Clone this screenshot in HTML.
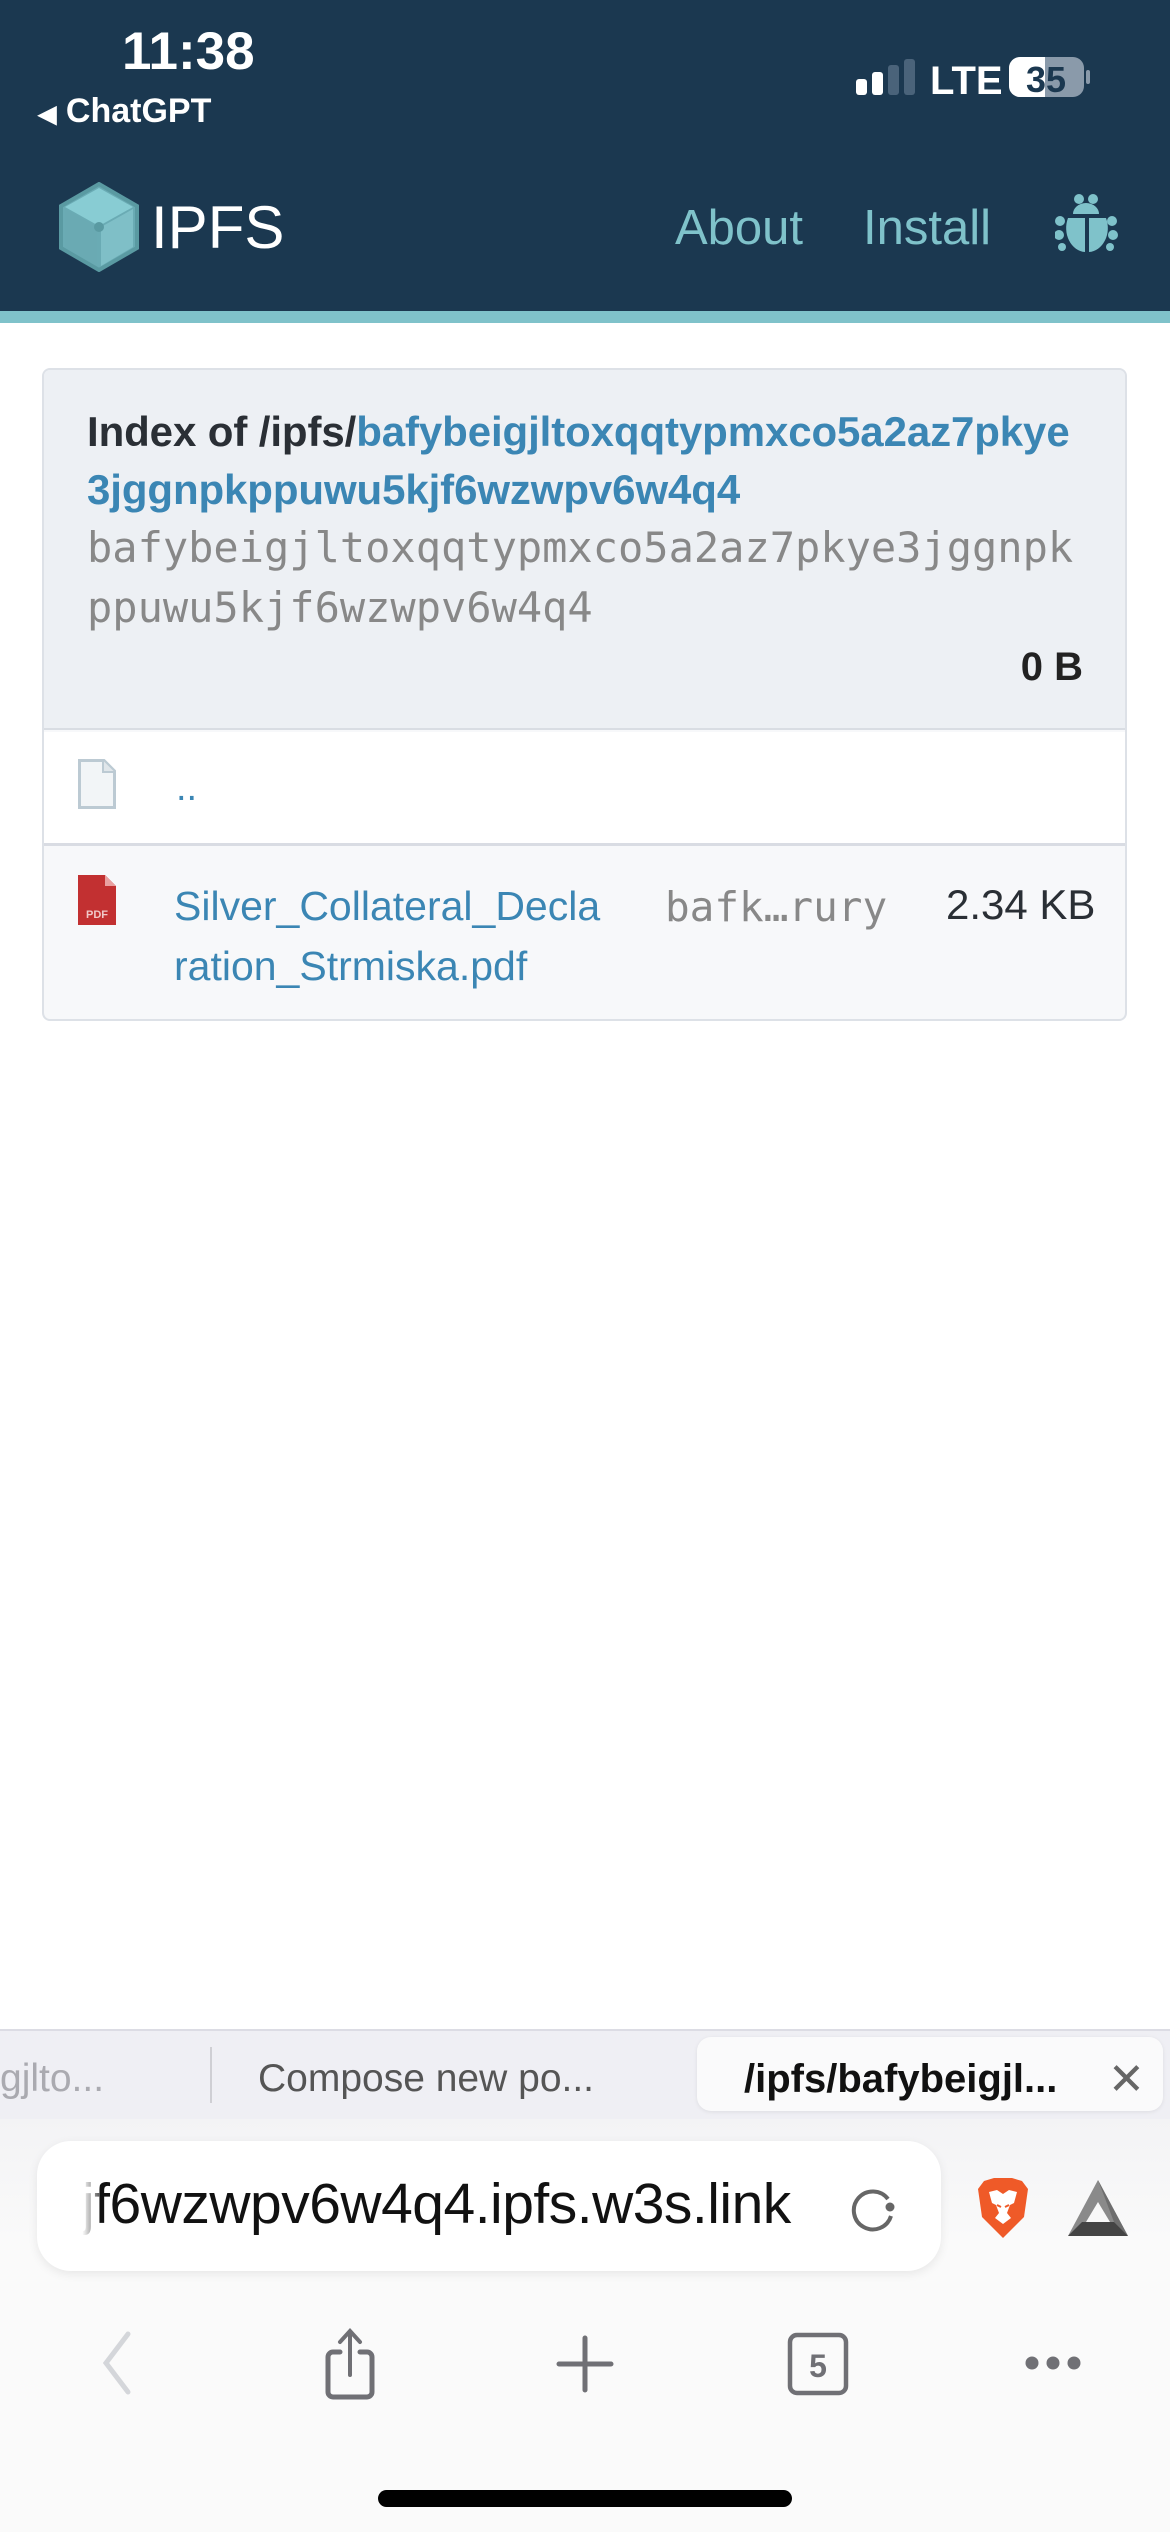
<!DOCTYPE html>
<html><head><meta charset="utf-8"><style>
*{margin:0;padding:0;box-sizing:border-box}
body{width:1170px;height:2532px;position:relative;overflow:hidden;background:#fff;font-family:"Liberation Sans",Arial,sans-serif}
.a{position:absolute;white-space:nowrap}
.mono{font-family:"DejaVu Sans Mono","Liberation Mono",monospace}
</style></head><body>
<div class="a" style="left:0;top:0;width:1170px;height:311px;background:#1b3850"></div>
<div class="a" style="left:0;top:311px;width:1170px;height:12px;background:#7fc2ca"></div>
<div class="a" style="left:122px;top:22px;font-size:53px;font-weight:bold;color:#fff;line-height:60px">11:38</div>
<div class="a" style="left:38px;top:92px;font-size:34px;font-weight:bold;color:#fff;line-height:38px"><span style="font-size:24px">◀</span> ChatGPT</div>
<svg class="a" style="left:850px;top:55px" width="240" height="46">
<rect x="6" y="24" width="11" height="16" rx="3" fill="#fff"/>
<rect x="22" y="17" width="11" height="23" rx="3" fill="#fff"/>
<rect x="38" y="10" width="11" height="30" rx="3" fill="#4a637a"/>
<rect x="54" y="4" width="11" height="36" rx="3" fill="#4a637a"/>
<text x="80" y="39" font-family="Liberation Sans" font-weight="bold" font-size="40" fill="#fff">LTE</text>
<rect x="159" y="2" width="75" height="40" rx="11" fill="#8a9aaa"/>
<path d="M170 2 H195 V42 H170 A11 11 0 0 1 159 31 V13 A11 11 0 0 1 170 2Z" fill="#fff"/>
<rect x="236" y="15" width="4" height="14" rx="2" fill="#8a9aaa"/>
<text x="196" y="37" text-anchor="middle" font-family="Liberation Sans" font-weight="bold" font-size="36" fill="#1b3850">35</text>
</svg>
<svg class="a" style="left:58px;top:182px" width="82" height="90" viewBox="0 0 82 90">
<path d="M41 2 L79 24 L79 66 L41 88 L3 66 L3 24Z" fill="#6aabb4" stroke="#5a9aa2" stroke-width="4"/>
<path d="M41 6 L75 25 L41 44 L7 25Z" fill="#88ccd3"/>
<path d="M7 27 L39 45 L39 84 L7 65Z" fill="#6aaab3"/>
<path d="M43 45 L75 27 L75 65 L43 84Z" fill="#7fbfc7"/>
<circle cx="41" cy="45" r="5" fill="#5a9aa2"/>
</svg>
<div class="a" style="left:151px;top:193px;font-size:60px;color:#fff;line-height:70px">IPFS</div>
<div class="a" style="left:675px;top:200px;font-size:49px;color:#7fc2ca;line-height:56px">About</div>
<div class="a" style="left:863px;top:200px;font-size:49px;color:#7fc2ca;line-height:56px">Install</div>
<svg class="a" style="left:1055px;top:194px" width="64" height="60" viewBox="0 0 64 60">
<g fill="#7fc2ca"><circle cx="24" cy="5" r="5"/><circle cx="38" cy="5" r="5"/>
<path d="M18 20 A13 11 0 0 1 44 20Z"/>
<path d="M13 24 H30 V58 A20 24 0 0 1 13 24Z"/><path d="M34 24 H51 A20 24 0 0 1 34 58Z"/>
<circle cx="5" cy="27" r="5"/><circle cx="4" cy="41" r="5"/><circle cx="7" cy="53" r="4"/>
<circle cx="57" cy="27" r="5"/><circle cx="58" cy="41" r="5"/><circle cx="55" cy="53" r="4"/></g>
</svg>

<div class="a" style="left:42px;top:368px;width:1085px;height:653px;border:2px solid #dde1e7;border-radius:8px;overflow:hidden;background:#f7f8fa">
<div style="position:absolute;left:0;top:0;width:100%;height:360px;background:#edf0f4;border-bottom:2px solid #d9dde3"></div>
<div style="position:absolute;left:0;top:362px;width:100%;height:114px;background:#fff;border-bottom:3px solid #d9dce3"></div>
</div>
<div class="a" style="left:87px;top:403px;font-size:42px;font-weight:bold;color:#2a2f35;line-height:58px;letter-spacing:-0.1px">Index of /ipfs/<span style="color:#3b86b4">bafybeigjltoxqqtypmxco5a2az7pkye</span><br><span style="color:#3b86b4">3jggnpkppuwu5kjf6wzwpv6w4q4</span></div>
<div class="a mono" style="left:87px;top:518px;font-size:42px;color:#888;line-height:60px">bafybeigjltoxqqtypmxco5a2az7pkye3jggnpk<br>ppuwu5kjf6wzwpv6w4q4</div>
<div class="a" style="left:990px;top:644px;width:93px;text-align:right;font-size:40px;font-weight:bold;color:#222;line-height:46px">0 B</div>

<svg class="a" style="left:78px;top:759px" width="38" height="50"><path d="M1.5 1.5 H26 L36.5 12 V48.5 H1.5Z" fill="#f2f5f7" stroke="#bccad3" stroke-width="3"/><path d="M25 1.5 V13 H36.5" fill="#e0e6ea" stroke="#bccad3" stroke-width="2"/></svg>
<div class="a" style="left:176px;top:766px;font-size:38px;color:#3b86b4;line-height:44px">..</div>

<svg class="a" style="left:78px;top:875px" width="38" height="50"><path d="M0 0 H27 L38 11 V50 H0Z" fill="#c23031"/><path d="M27 0 V11 H38Z" fill="#e9a0a0"/><text x="19" y="43" text-anchor="middle" font-family="Liberation Sans" font-weight="bold" font-size="11" fill="#f0c8c8">PDF</text></svg>
<div class="a" style="left:174px;top:876px;font-size:41px;color:#3b86b4;line-height:60px;letter-spacing:0px">Silver_Collateral_Decla<br>ration_Strmiska.pdf</div>
<div class="a mono" style="left:665px;top:882px;font-size:41px;color:#888;line-height:50px">bafk…rury</div>
<div class="a" style="left:946px;top:880px;font-size:42px;color:#2a2f35;line-height:50px">2.34 KB</div>

<div class="a" style="left:0;top:2029px;width:1170px;height:90px;background:#efeff4;border-top:2px solid #dcdce4"></div>
<div class="a" style="left:0;top:2056px;font-size:39px;color:#aaaab0;line-height:46px">gjlto...</div>
<div class="a" style="left:210px;top:2047px;width:2px;height:56px;background:#cfcfd4"></div>
<div class="a" style="left:258px;top:2056px;font-size:39px;color:#555;line-height:46px">Compose new po...</div>
<div class="a" style="left:697px;top:2037px;width:466px;height:74px;background:#fafafb;border-radius:14px;box-shadow:0 1px 4px rgba(0,0,0,0.08)"></div>
<div class="a" style="left:744px;top:2056px;font-size:40px;font-weight:bold;color:#111;line-height:46px;letter-spacing:0px">/ipfs/bafybeigjl...</div>
<div class="a" style="left:1108px;top:2055px;font-size:44px;color:#666;line-height:50px">✕</div>
<div class="a" style="left:0;top:2119px;width:1170px;height:413px;background:linear-gradient(#f3f3f5,#fafafa 30%)"></div>
<div class="a" style="left:37px;top:2141px;width:904px;height:130px;background:#fff;border-radius:34px;box-shadow:0 3px 10px rgba(0,0,0,0.08)"></div>
<div class="a" style="left:78px;top:2160px;width:750px;height:90px;overflow:hidden">
<div class="a" style="left:-24px;top:10px;font-size:57px;color:#111;line-height:68px;letter-spacing:-0.5px">kjf6wzwpv6w4q4.ipfs.w3s.link</div>
<div class="a" style="left:0;top:0;width:22px;height:90px;background:linear-gradient(90deg,#fff 20%,rgba(255,255,255,0.3))"></div>
</div>
<svg class="a" style="left:850px;top:2185px" width="48" height="50"><path d="M38 14 A19 19 0 1 0 41 31" fill="none" stroke="#666" stroke-width="4"/><circle cx="40" cy="22" r="4.5" fill="#666"/></svg>
<svg class="a" style="left:976px;top:2177px" width="54" height="62" viewBox="0 0 54 62"><path d="M8 4 L18 1 H36 L46 4 L52 12 L48 40 L27 61 L6 40 L2 12Z" fill="#ef5a28"/><path d="M13 15 L21 13 L27 17 L33 13 L41 15 L38 26 L34 28 L31 36 L35 41 L27 47 L19 41 L23 36 L20 28 L16 26Z" fill="#fff"/><path d="M21 28 L25 30 M33 28 L29 30" stroke="#ef5a28" stroke-width="2"/></svg>
<svg class="a" style="left:1068px;top:2180px" width="60" height="56" viewBox="0 0 60 56"><path d="M30 0 L60 56 H0Z" fill="#8a8a8a"/><path d="M30 0 L60 56 L46 42Z" fill="#6e6e6e"/><path d="M0 56 L14 42 H46 L60 56Z" fill="#444"/><path d="M30 22 L42 42 H18Z" fill="#f8f8f8"/></svg>

<svg class="a" style="left:98px;top:2330px" width="40" height="66"><path d="M30 4 L8 33 L30 62" fill="none" stroke="#d4d6da" stroke-width="5" stroke-linecap="round"/></svg>
<svg class="a" style="left:322px;top:2328px" width="56" height="72"><path d="M18 24 H11 A5 5 0 0 0 6 29 V64 A5 5 0 0 0 11 69 H45 A5 5 0 0 0 50 64 V29 A5 5 0 0 0 45 24 H38" fill="none" stroke="#707075" stroke-width="5" stroke-linecap="round"/><path d="M28 47 V4 M18 14 L28 3 L38 14" fill="none" stroke="#707075" stroke-width="4" stroke-linecap="round"/></svg>
<svg class="a" style="left:556px;top:2335px" width="58" height="58"><path d="M29 3 V55 M3 29 H55" stroke="#707075" stroke-width="5" stroke-linecap="round"/></svg>
<svg class="a" style="left:787px;top:2332px" width="64" height="64"><rect x="3" y="3" width="56" height="58" rx="7" fill="none" stroke="#707075" stroke-width="4.5"/><text x="31" y="45" text-anchor="middle" font-family="Liberation Sans" font-weight="bold" font-size="32" fill="#707075">5</text></svg>
<svg class="a" style="left:1024px;top:2350px" width="60" height="26"><circle cx="8" cy="13" r="6.5" fill="#707075"/><circle cx="29" cy="13" r="6.5" fill="#707075"/><circle cx="50" cy="13" r="6.5" fill="#707075"/></svg>
<div class="a" style="left:378px;top:2490px;width:414px;height:17px;background:#000;border-radius:9px"></div>
</body></html>
